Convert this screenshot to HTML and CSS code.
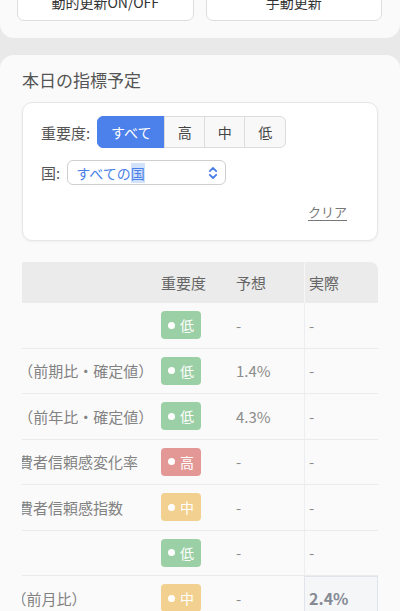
FILE: index.html
```html
<!DOCTYPE html>
<html lang="ja">
<head>
<meta charset="utf-8">
<meta name="viewport" content="width=device-width, initial-scale=1">
<title>経済指標</title>
<link rel="stylesheet" href="styles.css">
</head>
<body>
<main class="page">
  <section class="card card-top">
    <h2 class="card-title">更新設定</h2>
    <div class="btn-row">
      <button class="btn" type="button">動的更新ON/OFF</button>
      <button class="btn" type="button">手動更新</button>
    </div>
  </section>

  <section class="card card-schedule">
    <h2 class="card-title">本日の指標予定</h2>

    <div class="filter-box">
      <div class="filter-row">
        <span class="filter-label">重要度:</span>
        <div class="seg">
          <button class="seg-btn is-active" type="button">すべて</button>
          <button class="seg-btn" type="button">高</button>
          <button class="seg-btn" type="button">中</button>
          <button class="seg-btn" type="button">低</button>
        </div>
      </div>
      <div class="filter-row">
        <span class="filter-label">国:</span>
        <div class="select">
          <span class="select-text">すべての<span class="sel-mark">国</span></span>
          <svg class="select-icon" width="10" height="14" viewBox="0 0 10 14" aria-hidden="true">
            <path d="M1.8 5.2 L5 2 L8.2 5.2" fill="none" stroke="#4a7fe8" stroke-width="1.8" stroke-linecap="round" stroke-linejoin="round"/>
            <path d="M1.8 8.8 L5 12 L8.2 8.8" fill="none" stroke="#4a7fe8" stroke-width="1.8" stroke-linecap="round" stroke-linejoin="round"/>
          </svg>
        </div>
      </div>
      <div class="filter-actions">
        <button class="clear-btn" type="button">クリア</button>
      </div>
    </div>

    <div class="table-scroll">
      <div class="tbl">
        <div class="tr thead">
          <div class="td">国</div>
          <div class="td">指標</div>
          <div class="td">重要度</div>
          <div class="td">予想</div>
          <div class="td td-actual">実際</div>
        </div>
        <div class="tr">
          <div class="td">米国</div>
          <div class="td td-name">PPI</div>
          <div class="td"><span class="badge low"><i class="dot"></i>低</span></div>
          <div class="td td-val">-</div>
          <div class="td td-actual td-val">-</div>
        </div>
        <div class="tr">
          <div class="td">英国</div>
          <div class="td td-name">GDP（前期比・確定値）</div>
          <div class="td"><span class="badge low"><i class="dot"></i>低</span></div>
          <div class="td td-val">1.4%</div>
          <div class="td td-actual td-val">-</div>
        </div>
        <div class="tr">
          <div class="td">英国</div>
          <div class="td td-name">GDP（前年比・確定値）</div>
          <div class="td"><span class="badge low"><i class="dot"></i>低</span></div>
          <div class="td td-val">4.3%</div>
          <div class="td td-actual td-val">-</div>
        </div>
        <div class="tr">
          <div class="td">米国</div>
          <div class="td td-name">米消費者信頼感変化率</div>
          <div class="td"><span class="badge high"><i class="dot"></i>高</span></div>
          <div class="td td-val">-</div>
          <div class="td td-actual td-val">-</div>
        </div>
        <div class="tr">
          <div class="td">米国</div>
          <div class="td td-name">米消費者信頼感指数</div>
          <div class="td"><span class="badge mid"><i class="dot"></i>中</span></div>
          <div class="td td-val">-</div>
          <div class="td td-actual td-val">-</div>
        </div>
        <div class="tr">
          <div class="td">独</div>
          <div class="td td-name">ZEW</div>
          <div class="td"><span class="badge low"><i class="dot"></i>低</span></div>
          <div class="td td-val">-</div>
          <div class="td td-actual td-val">-</div>
        </div>
        <div class="tr">
          <div class="td">日本</div>
          <div class="td td-name">CPI（前月比）</div>
          <div class="td"><span class="badge mid"><i class="dot"></i>中</span></div>
          <div class="td td-val">-</div>
          <div class="td td-actual td-hl">2.4%</div>
        </div>
        <div class="tr">
          <div class="td">豪州</div>
          <div class="td td-name">雇用者数</div>
          <div class="td"><span class="badge low"><i class="dot"></i>低</span></div>
          <div class="td td-val">-</div>
          <div class="td td-actual td-val">-</div>
        </div>
        <div class="tr">
          <div class="td">米国</div>
          <div class="td td-name">原油在庫</div>
          <div class="td"><span class="badge mid"><i class="dot"></i>中</span></div>
          <div class="td td-val">-</div>
          <div class="td td-actual td-val">-</div>
        </div>
      </div>
    </div>
  </section>
</main>
<script src="script.js"></script>
</body>
</html>
```

FILE: styles.css
```css
* { box-sizing: border-box; }

html, body {
  margin: 0;
  padding: 0;
}

body {
  background: #e9e9e9;
  font-family: "Noto Sans CJK JP", "Noto Sans", sans-serif;
  color: #555;
}

.page {
  display: flex;
  flex-direction: column;
  gap: 17px;
  padding-bottom: 40px;
}

.card {
  background: #fafafa;
  border-radius: 14px;
}

.card-title {
  margin: 0;
  font-size: 17px;
  font-weight: 400;
  line-height: 22px;
  color: #555;
}

/* top card */
.card-top {
  padding: 14px 18px 17px 17px;
}

.card-top .card-title {
  margin-bottom: 12px;
}

.btn-row {
  display: grid;
  grid-template-columns: 1fr 1fr;
  gap: 12px;
}

.btn {
  height: 38px;
  border: 1px solid #dedede;
  border-radius: 7px;
  background: #fff;
  font-family: inherit;
  font-size: 14px;
  color: #333;
  padding: 0;
}

/* schedule card */
.card-schedule {
  padding: 14px 22px 16px;
}

.card-schedule > .card-title {
  margin-bottom: 11px;
}

.filter-box {
  background: #fff;
  border: 1px solid #e6e6e6;
  border-radius: 10px;
  box-shadow: 0 1px 3px rgba(0, 0, 0, 0.05);
  padding: 13px 18px 15px;
  display: flex;
  flex-direction: column;
  gap: 12px;
}

.filter-row {
  display: flex;
  align-items: center;
  gap: 7px;
}

.filter-label {
  font-size: 15px;
  color: #555;
}

.seg {
  display: flex;
  height: 32px;
}

.seg-btn {
  height: 32px;
  width: 41px;
  padding: 0;
  border: 1px solid #dcdcdc;
  margin-left: -1px;
  background: #f8f8f9;
  font-family: inherit;
  font-size: 14px;
  color: #444;
}

.seg-btn:first-child {
  margin-left: 0;
  border-radius: 6px 0 0 6px;
}

.seg-btn:last-child {
  border-radius: 0 6px 6px 0;
  width: 42px;
}

.seg-btn.is-active {
  background: #4c80ea;
  border-color: #4c80ea;
  color: #fff;
  width: 68px;
}

.select {
  width: 159px;
  height: 25px;
  border: 1px solid #cfcfcf;
  border-radius: 6px;
  background: #fff;
  display: flex;
  align-items: center;
  justify-content: space-between;
  padding: 0 7px 0 8px;
}

.select-text {
  font-size: 14px;
  color: #4a7fe8;
  line-height: 18px;
}

.sel-mark {
  background: #d3e2fb;
}

.filter-actions {
  display: flex;
  justify-content: flex-end;
}

.clear-btn {
  height: 28px;
  padding: 0 12px;
  border: 0;
  background: transparent;
  font-family: inherit;
  font-size: 13px;
  color: #777;
  text-decoration: underline;
  text-underline-offset: 3px;
}

/* table */
.table-scroll {
  margin-top: 21px;
  overflow-x: auto;
  scrollbar-width: none;
}

.table-scroll::-webkit-scrollbar {
  display: none;
}

.tbl {
  width: 492px;
  border-radius: 8px 8px 0 0;
  overflow: hidden;
}

.tr {
  display: grid;
  grid-template-columns: 90px 174px 75px 79px 74px;
  height: 45.5px;
  background: #fafafa;
  border-bottom: 1px solid #ebebeb;
  font-size: 15px;
  color: #828282;
}

.tr.thead {
  height: 41px;
  background: #ebebeb;
  border-bottom: 0;
  color: #666;
}

.td {
  display: flex;
  align-items: center;
  padding: 0 11px;
  white-space: nowrap;
}

.td-name {
  padding-left: 12px;
  padding-right: 0;
}

.td-val {
  color: #8c8c8c;
}

.td-actual {
  padding-left: 4px;
  border-left: 1px solid #eceef2;
}

.thead .td-actual {
  border-left: 1px solid #f6f6f6;
  border-top-left-radius: 3px;
}

.td-hl {
  background: #f5f6f8;
  border: 1px solid #e1e4ea;
  font-size: 16px;
  font-weight: 600;
  color: #858a95;
}

.badge {
  display: inline-flex;
  align-items: center;
  justify-content: center;
  gap: 5px;
  width: 40px;
  height: 28px;
  border-radius: 4px;
  font-size: 14px;
  color: #fff;
}

.badge .dot {
  width: 7px;
  height: 7px;
  border-radius: 50%;
  background: #fff;
}

.badge.low { background: #9bcfa6; }
.badge.mid { background: #f2d08f; }
.badge.high { background: #e39896; }
```

FILE: script.js
```js
function applyScroll() {
  var s = document.querySelector('.table-scroll');
  if (s) {
    s.scrollLeft = s.scrollWidth - s.clientWidth;
  }
  window.scrollTo(0, 65);
}
applyScroll();
window.addEventListener('load', applyScroll);
```
